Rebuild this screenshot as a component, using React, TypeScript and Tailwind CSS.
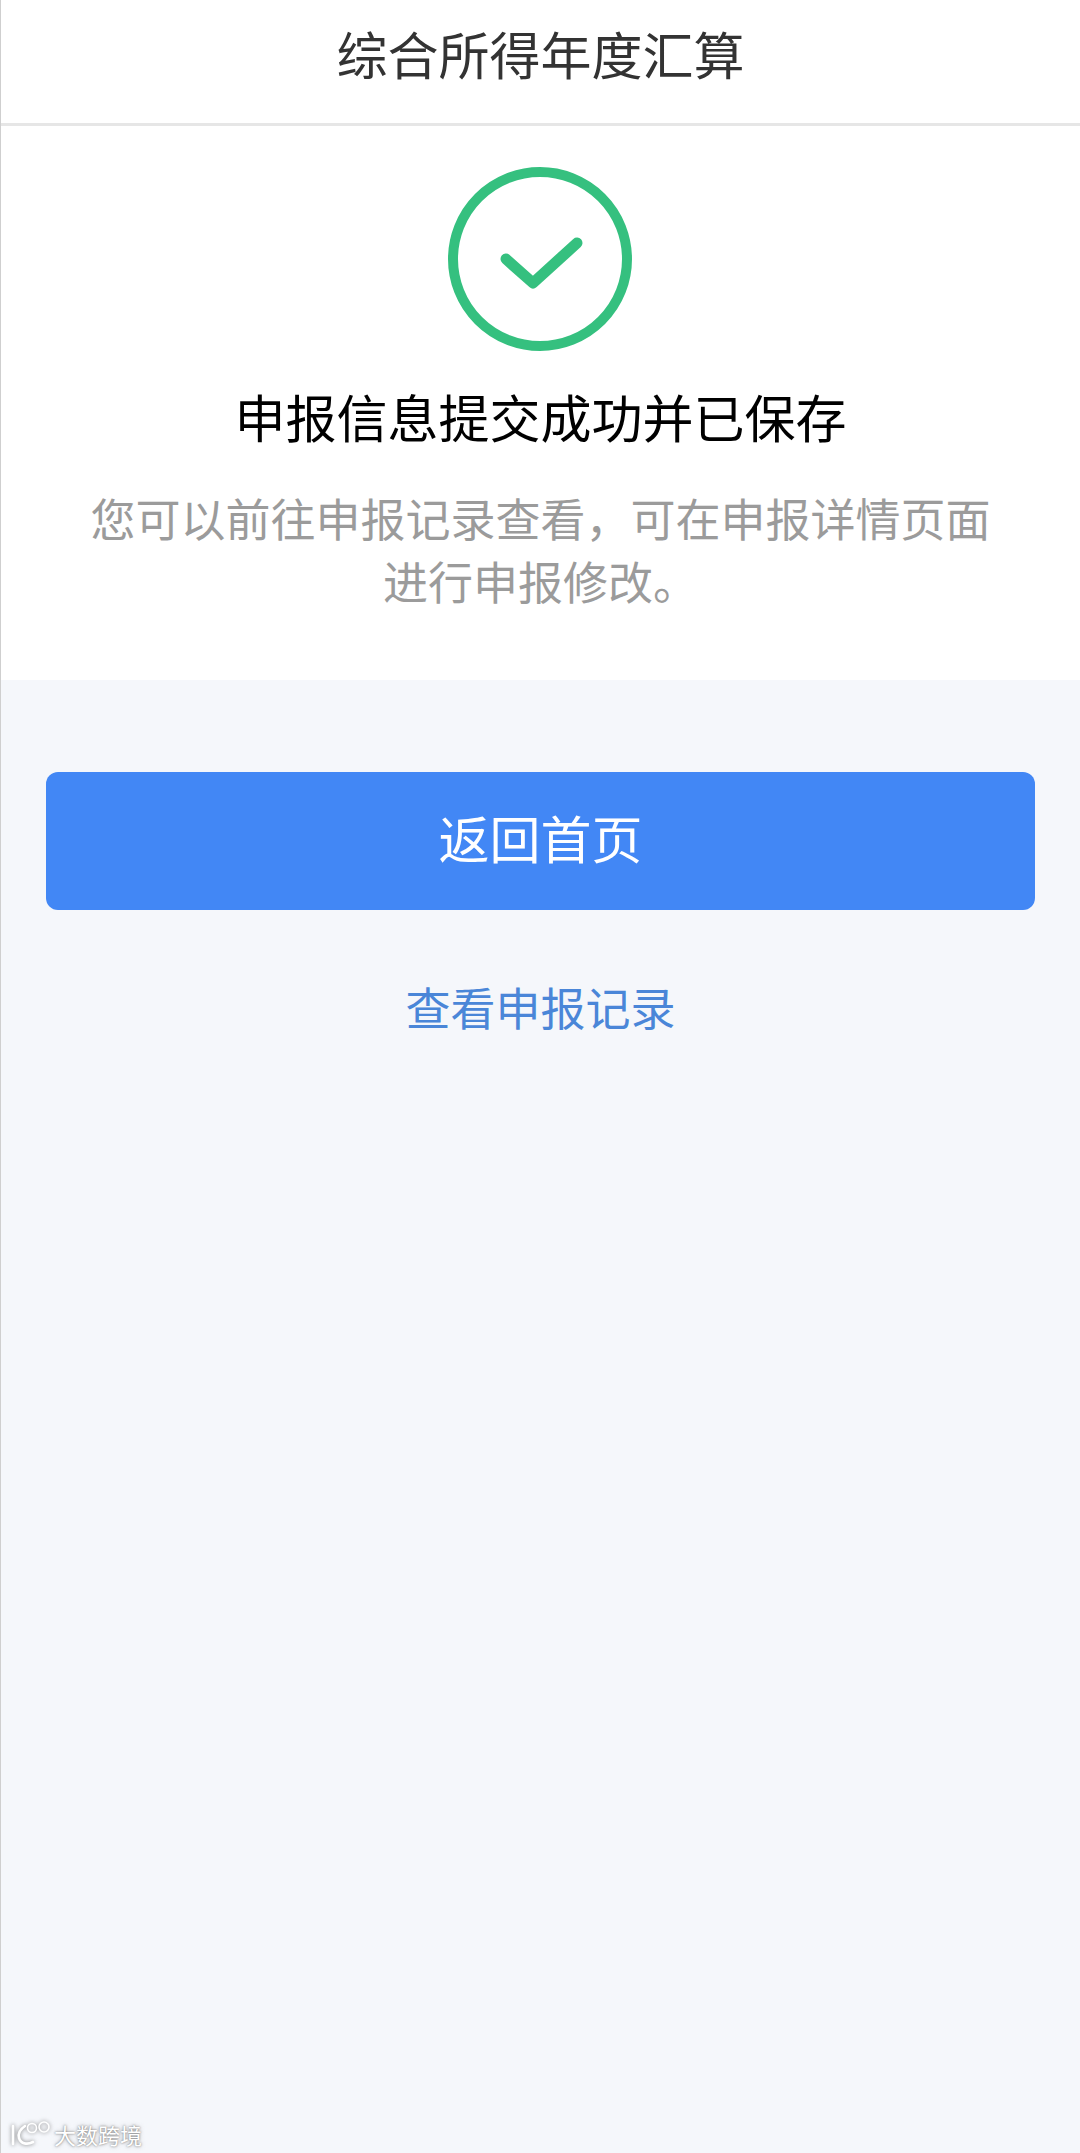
const cjk = "font-['Noto_Sans_CJK_SC','Noto_Sans',sans-serif]";
const hint = '您可以前往申报记录查看\uFF0C可在申报详情页面进行申报修改。';

const SuccessIcon = () => (
  <svg className="mr-[2px]" width="184" height="184" viewBox="0 0 184 184" fill="none" aria-hidden="true">
    <circle cx="92" cy="92" r="87" stroke="#35c07f" strokeWidth="10" />
    <path
      d="M58 92 L85 116 L129 76"
      stroke="#35c07f"
      strokeWidth="11"
      strokeLinecap="round"
      strokeLinejoin="round"
    />
  </svg>
);

const Watermark = () => (
  <div className="absolute left-[9px] bottom-[5px] flex items-center gap-[2px] text-white [text-shadow:0_0_2px_rgba(90,90,90,0.8),0_0_4px_rgba(110,110,110,0.5)]">
    <svg
      className="drop-shadow-[0_0_2px_rgba(90,90,90,0.8)]"
      width="42"
      height="28"
      viewBox="0 0 42 28"
      fill="none"
      aria-hidden="true"
    >
      <g stroke="#ffffff" strokeLinecap="round">
        <path d="M3 6 V24" strokeWidth="2.6" />
        <path d="M15 6 C9 10 8 14 9 18 C11 24 17 25 23 22" strokeWidth="2.6" />
        <circle cx="22" cy="8" r="4.5" strokeWidth="1.6" />
        <circle cx="34" cy="7" r="5" strokeWidth="1.6" />
      </g>
    </svg>
    <span className="text-[22px] leading-[26px]">大数跨境</span>
  </div>
);

export default function App() {
  return (
    <div className={`${cjk} relative flex min-h-[2153px] flex-col border-l border-[#cfcfcf] bg-[#f5f7fb]`}>
      <header className="flex h-[126px] items-center justify-center border-b-[3px] border-[#e6e6e6] bg-white pb-[16px]">
        <h1 className="text-[51px] leading-none font-normal text-[#333333]">综合所得年度汇算</h1>
      </header>

      <section className="flex flex-col items-center bg-white px-[85px] pt-[41px] pb-[68px] text-center">
        <SuccessIcon />
        <h2 className="mt-[33px] text-[51px] leading-[64px] font-normal text-black">申报信息提交成功并已保存</h2>
        <p className="mt-[38px] text-[45px] leading-[63px] text-[#9b9b9b]">{hint}</p>
      </section>

      <div className="flex flex-col items-center px-[45px] pt-[92px]">
        <button className="flex h-[138px] w-full items-center justify-center rounded-[12px] bg-[#4287f5] pb-[8px] text-[51px] text-white">
          返回首页
        </button>
        <a className="mt-[65px] text-[45px] leading-[64px] text-[#4a86d8]">查看申报记录</a>
      </div>

      <Watermark />
    </div>
  );
}
